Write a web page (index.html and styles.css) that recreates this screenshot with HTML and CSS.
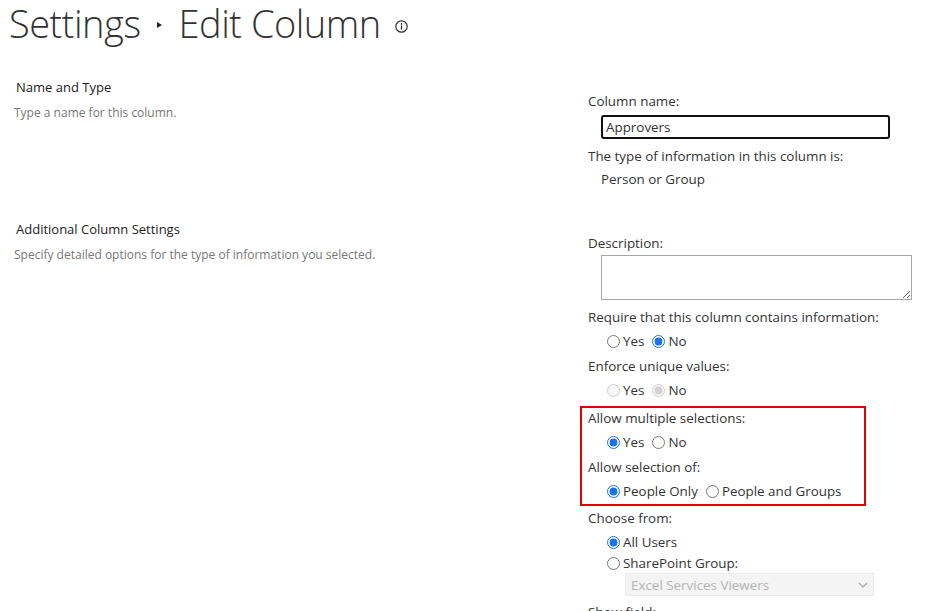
FILE: index.html
```html
<!DOCTYPE html>
<html>
<head>
<meta charset="utf-8">
<link rel="stylesheet" href="styles.css">
</head>
<body>
<h1 class="title">
  <span class="crumb">Settings</span>
  <span class="sep"></span>
  <span class="crumb">Edit Column</span>
  <svg class="info" width="13" height="13" viewBox="0 0 13 13"><circle cx="6.5" cy="6.5" r="5.7" fill="none" stroke="#333" stroke-width="1.2"/><circle cx="6.5" cy="3.9" r="0.85" fill="#333"/><rect x="5.85" y="5.4" width="1.3" height="4.3" fill="#333"/></svg>
</h1>

<div class="section">
  <div class="left">
    <div class="sec-title">Name and Type</div>
    <div class="sec-desc">Type a name for this column.</div>
  </div>
  <div class="right">
    <div class="lbl">Column name:</div>
    <input class="text-input" type="text" value="Approvers">
    <div class="lbl gap7">The type of information in this column is:</div>
    <div class="lbl indent gap3">Person or Group</div>
  </div>
</div>

<div class="section">
  <div class="left">
    <div class="sec-title">Additional Column Settings</div>
    <div class="sec-desc">Specify detailed options for the type of information you selected.</div>
  </div>
  <div class="right">
    <div class="lbl">Description:</div>
    <textarea class="desc-area"></textarea>
    <div class="lbl gap7">Require that this column contains information:</div>
    <div class="radios">
      <label><input type="radio" name="req">Yes</label>
      <label><input type="radio" name="req" checked>No</label>
    </div>
    <div class="lbl gap5">Enforce unique values:</div>
    <div class="radios disabled">
      <label><input type="radio" name="uniq" disabled>Yes</label>
      <label><input type="radio" name="uniq" checked disabled>No</label>
    </div>
    <div class="highlight">
      <div class="lbl">Allow multiple selections:</div>
      <div class="radios">
        <label><input type="radio" name="multi" checked>Yes</label>
        <label><input type="radio" name="multi">No</label>
      </div>
      <div class="lbl gap5">Allow selection of:</div>
      <div class="radios">
        <label><input type="radio" name="selof" checked>People Only</label>
        <label><input type="radio" name="selof">People and Groups</label>
      </div>
    </div>
    <div class="lbl gap2">Choose from:</div>
    <div class="radios stack">
      <label><input type="radio" name="from" checked>All Users</label>
      <label><input type="radio" name="from">SharePoint Group:</label>
    </div>
    <div class="select-box">
      <span>Excel Services Viewers</span>
      <svg width="10" height="6" viewBox="0 0 10 6"><path d="M1 1l4 4 4-4" fill="none" stroke="#a6a6a6" stroke-width="1.2"/></svg>
    </div>
    <div class="lbl gap6">Show field:</div>
  </div>
</div>
</body>
</html>
```

FILE: styles.css
```css
html, body {
  margin: 0;
  padding: 0;
  background: #fff;
}
body {
  font-family: "Open Sans", "Noto Sans", sans-serif;
  color: #333;
  overflow: hidden;
  height: 611px;
}
.title {
  margin: 0;
  padding: 0 0 0 9px;
  height: 77px;
  display: flex;
  align-items: flex-start;
  font-family: "Open Sans Light", "Open Sans", sans-serif;
  font-weight: 300;
  font-size: 38px;
  line-height: 46px;
  color: #333;
  letter-spacing: -0.5px;
}
.crumb {
  display: block;
}
.sep {
  display: block;
  width: 0;
  height: 0;
  border-top: 3.5px solid transparent;
  border-bottom: 3.5px solid transparent;
  border-left: 5px solid #222;
  margin: 22px 17px 0 16px;
}
.info {
  margin: 20px 0 0 14px;
}
.section {
  display: grid;
  grid-template-columns: 588px 1fr;
  margin-bottom: 30px;
}
.left {
  padding-left: 14px;
}
.sec-title {
  font-size: 13px;
  line-height: 20px;
  color: #222;
  padding-left: 2px;
}
.sec-desc {
  font-size: 12px;
  line-height: 20px;
  color: #777;
  margin-top: 6px;
}
.right {
  padding-top: 14px;
  font-size: 13.4px;
}
.lbl {
  line-height: 20px;
  color: #333;
}
.indent { padding-left: 13px; }
.gap2 { margin-top: 2px; }
.gap3 { margin-top: 3px; }
.gap5 { margin-top: 5px; }
.gap6 { margin-top: 6px; }
.gap7 { margin-top: 7px; }
.text-input {
  display: block;
  box-sizing: border-box;
  margin: 4px 0 0 13px;
  width: 289px;
  height: 24px;
  border: 2px solid #111;
  border-radius: 3px;
  padding: 0 3px;
  font-family: inherit;
  font-size: 13.4px;
  color: #333;
  outline: none;
}
.desc-area {
  display: block;
  box-sizing: border-box;
  margin: 2px 0 0 13px;
  width: 311px;
  height: 45px;
  border: 1px solid #a6a6a6;
  border-radius: 0;
  font-family: inherit;
  font-size: 13px;
  resize: both;
  outline: none;
}
.radios {
  display: flex;
  gap: 7px;
  padding-left: 18px;
  margin-top: 4px;
  line-height: 20px;
  color: #333;
}
.radios label {
  display: flex;
  align-items: center;
}
.radios input {
  margin: 0 3px 0 1px;
  width: 13px;
  height: 13px;
  accent-color: #1a73e8;
}
.radios.stack {
  flex-direction: column;
  gap: 1px;
}
.highlight {
  margin: 6px 0 0 -8px;
  width: 276px;
  border: 2px solid #e00000;
  padding: 0 0 3px 6px;
}
.select-box {
  margin: 0 0 0 37px;
  width: 249px;
  height: 23px;
  box-sizing: border-box;
  background: #f4f4f4;
  border: 1px solid #ececec;
  display: flex;
  align-items: center;
  justify-content: space-between;
  padding: 0 5px 0 5px;
  color: #b3b3b3;
  font-size: 13.4px;
}
```
